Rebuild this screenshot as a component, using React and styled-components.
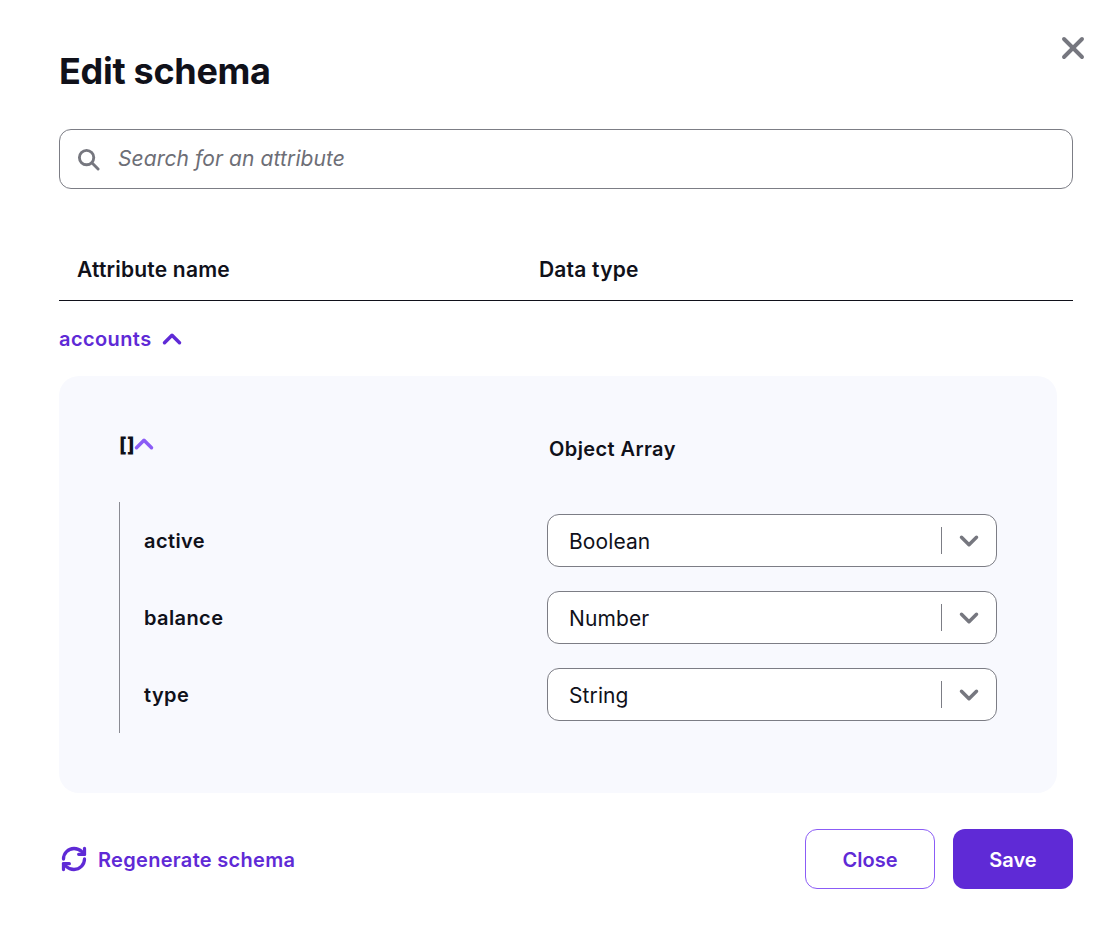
import styled, { createGlobalStyle } from "styled-components";
import { X, ChevronUp, ChevronDown, RefreshCw } from "lucide-react";

const GlobalStyle = createGlobalStyle`
  html, body {
    margin: 0;
    padding: 0;
    background: #fff;
    font-family: Inter, "Liberation Sans", sans-serif;
    color: #10111a;
  }
  * {
    box-sizing: border-box;
  }
`;

const Modal = styled.div`
  position: relative;
  width: 1118px;
  height: 932px;
  padding: 47px 45px 0 59px;
`;

const CloseIcon = styled.button`
  position: absolute;
  top: 29px;
  right: 26px;
  width: 38px;
  height: 38px;
  padding: 0;
  border: none;
  background: none;
  color: #76777f;
  display: flex;
  align-items: center;
  justify-content: center;
`;

const Title = styled.h1`
  margin: 0;
  height: 48px;
  font-size: 36px;
  line-height: 48px;
  font-weight: 700;
  letter-spacing: -0.3px;
`;

const SearchBox = styled.div`
  margin-top: 34px;
  height: 60px;
  border: 1px solid #7c7d85;
  border-radius: 12px;
  display: flex;
  align-items: center;
  gap: 18px;
  padding-left: 17px;
  color: #76777f;
`;

const SearchText = styled.span`
  font-size: 21px;
  font-style: italic;
  letter-spacing: 0.1px;
  line-height: 26px;
  color: #6d6e76;
`;

const TableHead = styled.div`
  margin-top: 48px;
  height: 64px;
  padding: 2px 0 0 18px;
  border-bottom: 1px solid #10111a;
  display: grid;
  grid-template-columns: 462px 1fr;
  align-items: center;
  font-size: 21px;
  font-weight: 600;
  letter-spacing: 0.2px;
`;

const Group = styled.div`
  margin-top: 25px;
  height: 26px;
  display: flex;
  align-items: center;
  gap: 5px;
  color: #5f2ad6;
  font-size: 20px;
  font-weight: 600;
  letter-spacing: 0.4px;
`;

const Panel = styled.div`
  margin-top: 24px;
  width: 998px;
  height: 417px;
  border-radius: 20px;
  background: #f8f9fe;
  padding: 57px 60px 0 60px;
`;

const ArrayRow = styled.div`
  display: grid;
  grid-template-columns: 430px 1fr;
  height: 69px;
  font-size: 20px;
  font-weight: 600;
  letter-spacing: 0.4px;
`;

const ArrayKey = styled.div`
  display: flex;
  align-items: flex-start;
  height: 26px;
  color: #8b5cf6;

  svg {
    margin-top: -4px;
  }
`;

const Brackets = styled.span`
  color: #10111a;
  font-weight: 800;
  width: 10px;
`;

const ArrayType = styled.div`
  padding-top: 3px;
  line-height: 26px;
`;

const Rows = styled.div`
  border-left: 1px solid #8a8b93;
  height: 231px;
  padding: 12px 0 0 24px;
  display: flex;
  flex-direction: column;
  gap: 24px;
`;

const Row = styled.div`
  display: grid;
  grid-template-columns: 403px 450px;
  align-items: center;
  height: 53px;
  font-size: 20px;
  font-weight: 600;
  letter-spacing: 0.4px;
`;

const Select = styled.div`
  height: 53px;
  background: #fff;
  border: 1px solid #7c7d85;
  border-radius: 12px;
  display: flex;
  align-items: center;
  padding-left: 21px;
  font-size: 21px;
  font-weight: 400;
  letter-spacing: 0.1px;
`;

const SelectValue = styled.span`
  flex: 1;
  padding-top: 1px;
`;

const Divider = styled.span`
  width: 1px;
  height: 27px;
  background: #7c7d85;
`;

const Caret = styled.span`
  width: 54px;
  display: flex;
  justify-content: center;
  color: #76777f;
`;

const Footer = styled.div`
  margin-top: 36px;
  display: flex;
  align-items: center;
  gap: 18px;
`;

const Regenerate = styled.div`
  flex: 1;
  display: flex;
  align-items: center;
  gap: 10px;
  padding-left: 1px;
  color: #5f2ad6;
  font-size: 20px;
  font-weight: 600;
  letter-spacing: 0.3px;
`;

const RegenerateLabel = styled.span`
  padding-top: 2px;
`;

const Button = styled.button`
  height: 60px;
  width: ${(p) => (p.$primary ? "120px" : "130px")};
  padding: 2px 0 0;
  border-radius: 12px;
  border: ${(p) => (p.$primary ? "none" : "1px solid #8b5cf6")};
  background: ${(p) => (p.$primary ? "#5f2ad6" : "#fff")};
  color: ${(p) => (p.$primary ? "#fff" : "#5f2ad6")};
  font-family: inherit;
  font-size: 20px;
  font-weight: 600;
`;

const SearchIcon = () => (
  <svg width="23" height="23" viewBox="0 0 24 24" fill="none" stroke="currentColor" strokeWidth="3" strokeLinecap="round">
    <circle cx="10" cy="10" r="7.5" />
    <path d="M15.5 15.5l6.5 6.5" />
  </svg>
);

const attributes = [
  { name: "active", type: "Boolean" },
  { name: "balance", type: "Number" },
  { name: "type", type: "String" },
];

export default function App() {
  return (
    <Modal>
      <GlobalStyle />
      <CloseIcon aria-label="Close">
        <X size={36} strokeWidth={2.6} />
      </CloseIcon>
      <Title>Edit schema</Title>
      <SearchBox>
        <SearchIcon />
        <SearchText>Search for an attribute</SearchText>
      </SearchBox>
      <TableHead>
        <span>Attribute name</span>
        <span>Data type</span>
      </TableHead>
      <Group>
        accounts
        <ChevronUp size={30} strokeWidth={2.8} />
      </Group>
      <Panel>
        <ArrayRow>
          <ArrayKey>
            <Brackets>[]</Brackets>
            <ChevronUp size={30} strokeWidth={2.8} />
          </ArrayKey>
          <ArrayType>Object Array</ArrayType>
        </ArrayRow>
        <Rows>
          {attributes.map((a) => (
            <Row key={a.name}>
              <span>{a.name}</span>
              <Select>
                <SelectValue>{a.type}</SelectValue>
                <Divider />
                <Caret>
                  <ChevronDown size={30} strokeWidth={2.8} />
                </Caret>
              </Select>
            </Row>
          ))}
        </Rows>
      </Panel>
      <Footer>
        <Regenerate>
          <RefreshCw size={28} strokeWidth={2.8} />
          <RegenerateLabel>Regenerate schema</RegenerateLabel>
        </Regenerate>
        <Button>Close</Button>
        <Button $primary>Save</Button>
      </Footer>
    </Modal>
  );
}
